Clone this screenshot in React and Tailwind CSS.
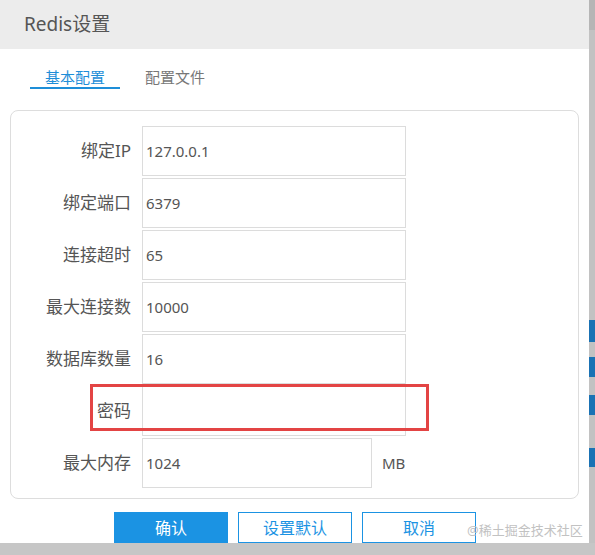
const FONT = { fontFamily: '"Noto Sans", "Noto Sans CJK SC", sans-serif' };

const ROWS = [
  { label: '绑定IP', value: '127.0.0.1' },
  { label: '绑定端口', value: '6379' },
  { label: '连接超时', value: '65' },
  { label: '最大连接数', value: '10000' },
  { label: '数据库数量', value: '16' },
  { label: '密码', value: '' },
];

function Row({ label, value, narrow, unit }) {
  return (
    <div className="flex items-center">
      <div className="w-[120px] text-right text-[17px] text-[#555]">{label}</div>
      <div
        className={`ml-[11px] flex h-[50px] items-center border border-[#dcdcdc] px-[3px] text-[15px] text-[#555] ${
          narrow ? 'w-[230px]' : 'w-[264px]'
        }`}
      >
        {value}
      </div>
      {unit && <span className="ml-[10px] text-[15px] text-[#555]">{unit}</span>}
    </div>
  );
}

export default function App() {
  return (
    <div className="relative flex h-[555px] w-[595px] flex-col bg-[#c4c4c4]" style={FONT}>
      <div className="flex h-[543px]">
        <div className="flex w-[589px] flex-col bg-white">
          <div className="flex h-[49px] items-center bg-[#ececec] px-[24px] text-[19px] text-[#555]">
            Redis设置
          </div>

          <div className="ml-[30px] mt-[18px] flex gap-[10px]">
            <div className="h-[22px] w-[90px] border-b-2 border-[#1e8ed8] text-center text-[15px] leading-[20px] text-[#1e8ed8]">
              基本配置
            </div>
            <div className="h-[22px] w-[90px] text-center text-[15px] leading-[20px] text-[#777]">配置文件</div>
          </div>

          <div className="mx-[10px] mt-[21px] flex h-[390px] flex-col gap-[2px] rounded-[8px] border border-[#dddddd] pt-[15px]">
            {ROWS.map((r) => (
              <Row key={r.label} label={r.label} value={r.value} />
            ))}
            <Row label="最大内存" value="1024" narrow unit="MB" />
          </div>

          <div className="ml-[114px] mt-[13px] flex gap-[10px] text-[16px]">
            <button type="button" className="h-[31px] w-[114px] bg-[#1b93e3] text-white">
              确认
            </button>
            <button type="button" className="h-[31px] w-[114px] border border-[#1b93e3] text-[#1b93e3]">
              设置默认
            </button>
            <button type="button" className="h-[31px] w-[114px] border border-[#1b93e3] text-[#1b93e3]">
              取消
            </button>
          </div>
        </div>

        <div className="flex w-[6px] flex-col bg-[#c2c2c2]">
          <div className="h-[30px] bg-[#b5b5b5]" />
          <div className="mt-[290px] h-[22px] bg-[#1a72b4]" />
          <div className="mt-[15px] h-[20px] bg-[#1a72b4]" />
          <div className="mt-[18px] h-[20px] bg-[#1a72b4]" />
          <div className="mt-[33px] h-[19px] bg-[#1a72b4]" />
        </div>
      </div>
      <div className="h-[12px] bg-[#c6c6c6]" />

      <div className="absolute left-[90px] top-[384px] h-[47px] w-[339px] border-[3px] border-[#e34444]" />

      <div className="absolute left-[467px] top-[521px] text-[13px] text-[#c2c2c2]">@稀土掘金技术社区</div>
    </div>
  );
}
